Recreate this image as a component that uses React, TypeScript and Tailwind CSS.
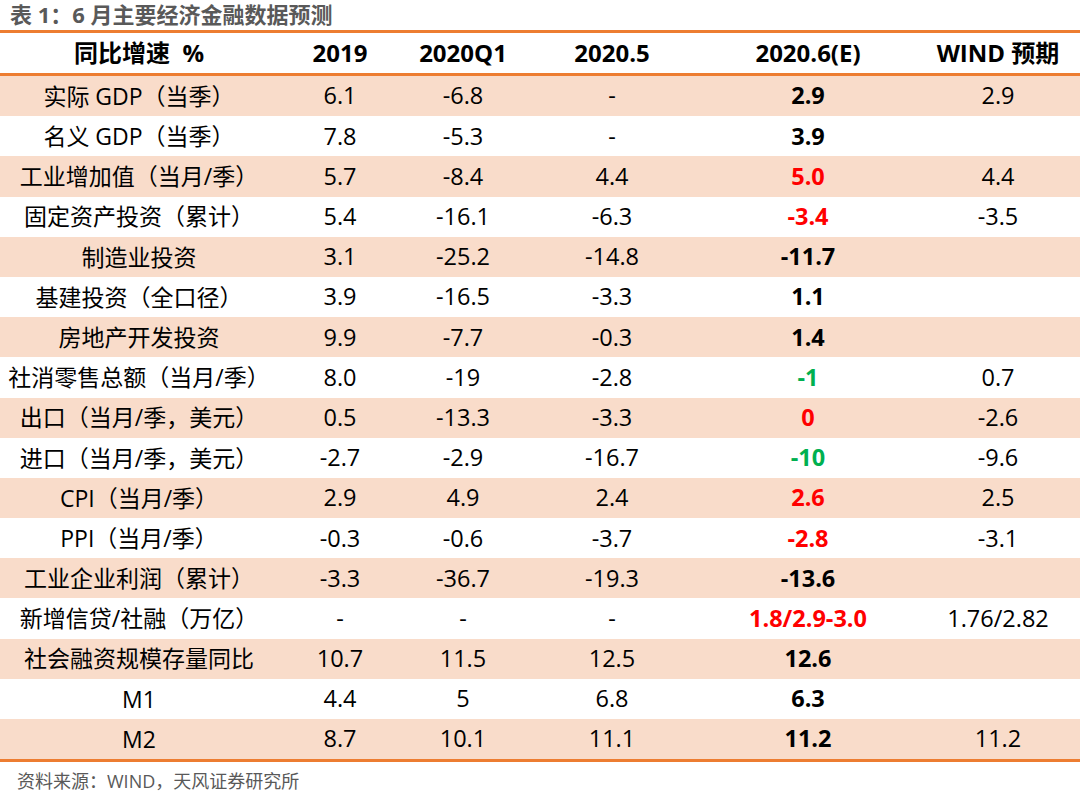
type Cell = { v: string; bold?: boolean; color?: string }

const rows: { label: string; cells: Cell[]; shade: boolean }[] = [
  { label: "实际 GDP（当季）", cells: [{ v: "6.1" }, { v: "-6.8" }, { v: "-" }, { v: "2.9", bold: true }, { v: "2.9" }], shade: true },
  { label: "名义 GDP（当季）", cells: [{ v: "7.8" }, { v: "-5.3" }, { v: "-" }, { v: "3.9", bold: true }, { v: "" }], shade: false },
  { label: "工业增加值（当月/季）", cells: [{ v: "5.7" }, { v: "-8.4" }, { v: "4.4" }, { v: "5.0", bold: true, color: "red" }, { v: "4.4" }], shade: true },
  { label: "固定资产投资（累计）", cells: [{ v: "5.4" }, { v: "-16.1" }, { v: "-6.3" }, { v: "-3.4", bold: true, color: "red" }, { v: "-3.5" }], shade: false },
  { label: "制造业投资", cells: [{ v: "3.1" }, { v: "-25.2" }, { v: "-14.8" }, { v: "-11.7", bold: true }, { v: "" }], shade: true },
  { label: "基建投资（全口径）", cells: [{ v: "3.9" }, { v: "-16.5" }, { v: "-3.3" }, { v: "1.1", bold: true }, { v: "" }], shade: false },
  { label: "房地产开发投资", cells: [{ v: "9.9" }, { v: "-7.7" }, { v: "-0.3" }, { v: "1.4", bold: true }, { v: "" }], shade: true },
  { label: "社消零售总额（当月/季）", cells: [{ v: "8.0" }, { v: "-19" }, { v: "-2.8" }, { v: "-1", bold: true, color: "green" }, { v: "0.7" }], shade: false },
  { label: "出口（当月/季，美元）", cells: [{ v: "0.5" }, { v: "-13.3" }, { v: "-3.3" }, { v: "0", bold: true, color: "red" }, { v: "-2.6" }], shade: true },
  { label: "进口（当月/季，美元）", cells: [{ v: "-2.7" }, { v: "-2.9" }, { v: "-16.7" }, { v: "-10", bold: true, color: "green" }, { v: "-9.6" }], shade: false },
  { label: "CPI（当月/季）", cells: [{ v: "2.9" }, { v: "4.9" }, { v: "2.4" }, { v: "2.6", bold: true, color: "red" }, { v: "2.5" }], shade: true },
  { label: "PPI（当月/季）", cells: [{ v: "-0.3" }, { v: "-0.6" }, { v: "-3.7" }, { v: "-2.8", bold: true, color: "red" }, { v: "-3.1" }], shade: false },
  { label: "工业企业利润（累计）", cells: [{ v: "-3.3" }, { v: "-36.7" }, { v: "-19.3" }, { v: "-13.6", bold: true }, { v: "" }], shade: true },
  { label: "新增信贷/社融（万亿）", cells: [{ v: "-" }, { v: "-" }, { v: "-" }, { v: "1.8/2.9-3.0", bold: true, color: "red" }, { v: "1.76/2.82" }], shade: false },
  { label: "社会融资规模存量同比", cells: [{ v: "10.7" }, { v: "11.5" }, { v: "12.5" }, { v: "12.6", bold: true }, { v: "" }], shade: true },
  { label: "M1", cells: [{ v: "4.4" }, { v: "5" }, { v: "6.8" }, { v: "6.3", bold: true }, { v: "" }], shade: false },
  { label: "M2", cells: [{ v: "8.7" }, { v: "10.1" }, { v: "11.1" }, { v: "11.2", bold: true }, { v: "11.2" }], shade: true },
]

const headers = ["同比增速  %", "2019", "2020Q1", "2020.5", "2020.6(E)", "WIND 预期"]

const grid = "grid grid-cols-[278px_124px_122px_176px_216px_164px]"

export default function App() {
  return (
    <div
      className="w-[1080px] h-[795px] bg-white text-black"
      style={{ fontFamily: '"Open Sans", "Noto Sans CJK SC", sans-serif' }}
    >
      <div className="h-[30px] pl-[10px] flex items-center text-[22px] font-bold text-[#595959] leading-none pb-[3px]">
        表 1：6 月主要经济金融数据预测
      </div>
      <div className="border-t-[3px] border-b-[3px] border-[#ED7D31]">
        <div className={`${grid} h-[40px] text-[24px] font-bold`}>
          {headers.map((h) => (
            <div key={h} className="flex items-center justify-center whitespace-pre">
              {h}
            </div>
          ))}
        </div>
      </div>
      <div className="border-b-[3px] border-[#ED7D31]">
        {rows.map((r) => (
          <div
            key={r.label}
            className={`${grid} h-[40.2px] ${r.shade ? "bg-[#F9DCCA]" : "bg-white"}`}
          >
            <div className="flex items-center justify-center text-[23px]">{r.label}</div>
            {r.cells.map((c, i) => (
              <div
                key={i}
                className={`flex items-center justify-center text-[23.5px] ${c.bold ? "font-bold" : ""} ${
                  c.color === "red" ? "text-[#FF0000]" : c.color === "green" ? "text-[#00B050]" : ""
                }`}
              >
                {c.v}
              </div>
            ))}
          </div>
        ))}
      </div>
      <div className="pl-[17px] pt-[10px] text-[18px] text-[#595959] leading-none">
        资料来源：WIND，天风证券研究所
      </div>
    </div>
  )
}
